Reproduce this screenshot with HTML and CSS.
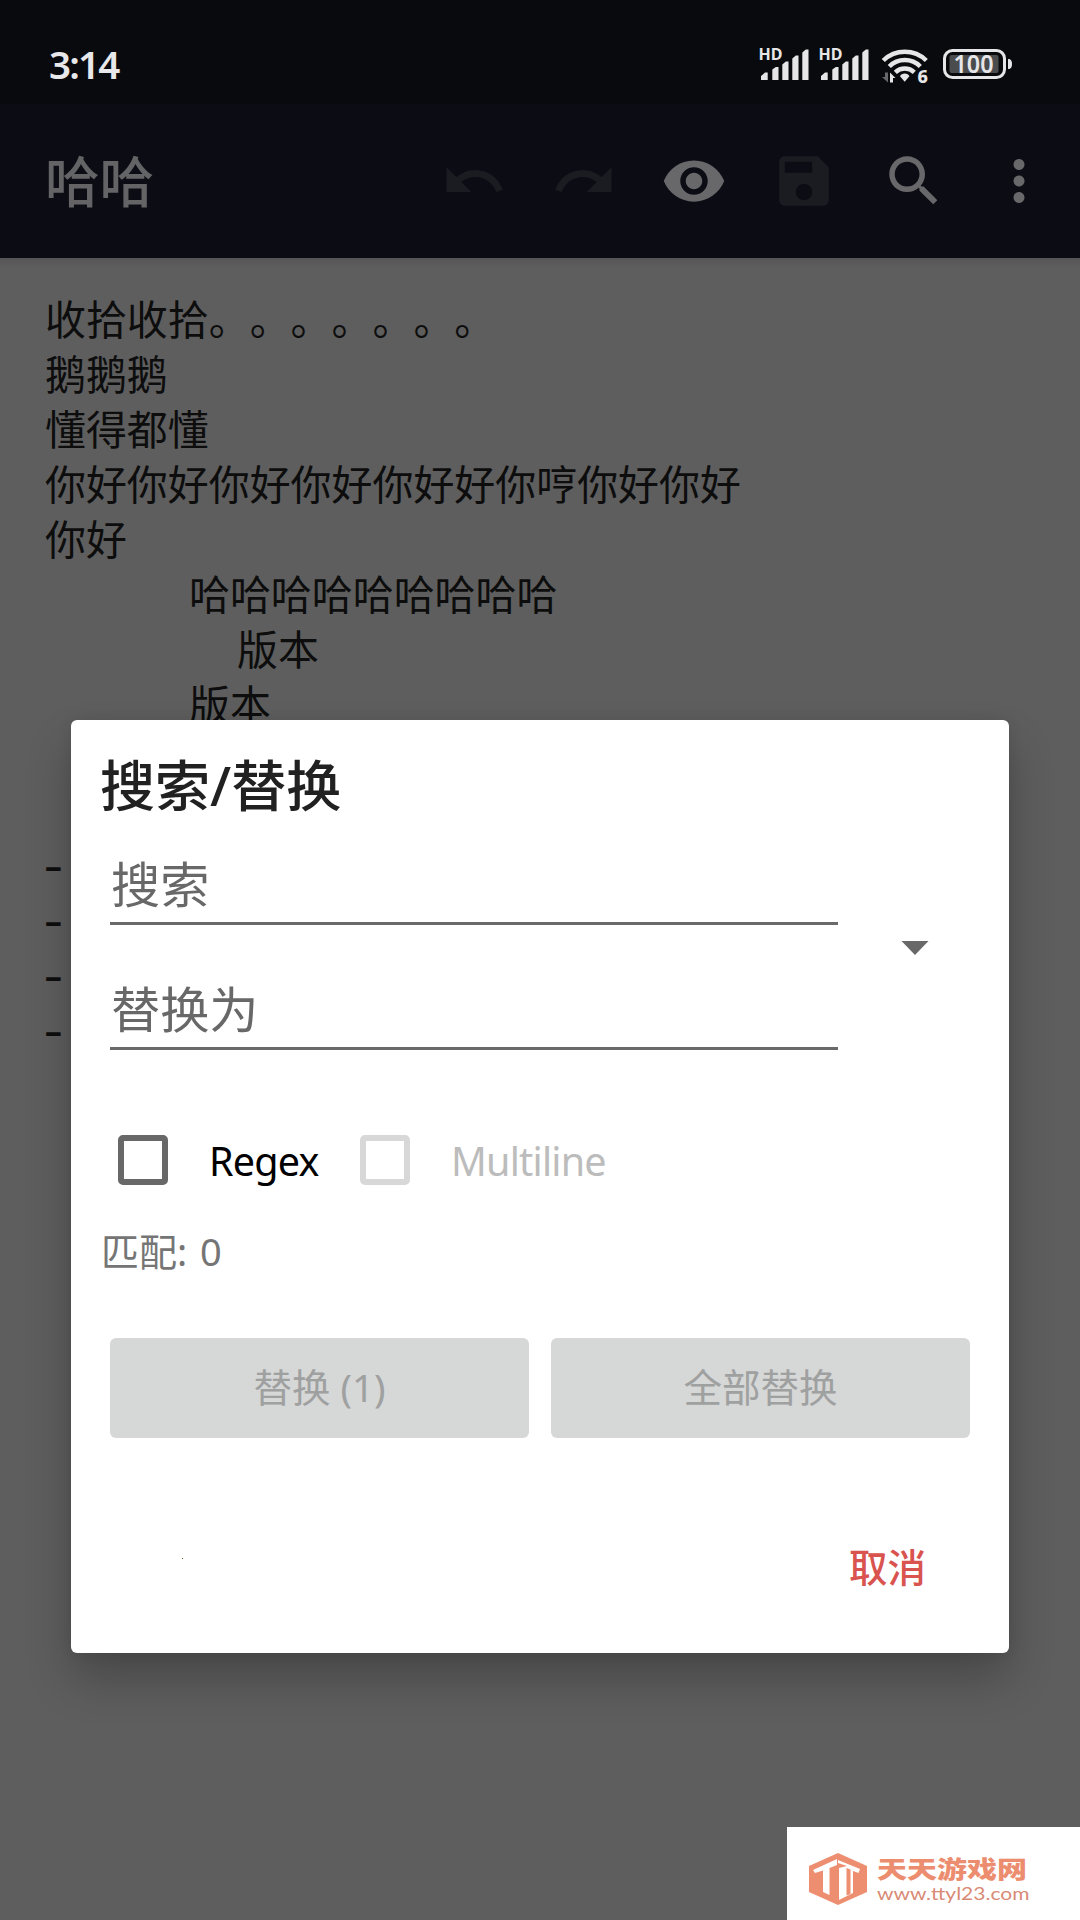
FILE: index.html
```html
<!DOCTYPE html>
<html lang="zh-CN">
<head>
<meta charset="utf-8">
<title>搜索/替换</title>
<link rel="stylesheet" href="styles.css">
</head>
<body>
<div class="screen">
  <header class="status">
    <span class="clock">3:14</span>
    <svg class="status-icons" viewBox="0 0 260 40" width="260" height="40">
      <defs>
        <g id="bars">
          <path d="M1 35v-4l4-3.500h2.700V35zM12.300 35V24.500l3.500-2.500h2.700V35zM22.300 35V19.500l3.500-3h2.700V35zM32.300 35V13.500l3.500-3h2.700V35zM42.300 35V7.500l3.500-3h2.700V35z"/>
        </g>
      </defs>
      <g class="lit">
        <use href="#bars" x="0"/>
        <use href="#bars" x="60"/>
        <text class="hd" x="-1.500" y="15" textLength="24" lengthAdjust="spacingAndGlyphs">HD</text>
        <text class="hd" x="58.500" y="15" textLength="24" lengthAdjust="spacingAndGlyphs">HD</text>
        <path d="M144.700 28.500c-2 0-4 1-4.700 2.700l4.700 5.500 4.700-5.500c-.7-1.700-2.700-2.700-4.700-2.700z"/>
        <text class="six" x="157.500" y="37.500">6</text>
        <path d="M130 27.500l5.500 5.500H133v4.500h-3z"/>
      </g>
      <path class="faint" d="M128 37.500l-6-5.500h3v-4.500h3z"/>
      <g class="arc">
        <path d="M123.300 15.500a31 31 0 0 1 43 0"/>
        <path d="M129.300 21.500a22 22 0 0 1 31 0"/>
        <path d="M135.300 27.300a14 14 0 0 1 19 0"/>
      </g>
      <rect class="shell" x="184.500" y="5.500" width="60" height="27" rx="8"/>
      <rect class="charge" x="189.500" y="10" width="49" height="18" rx="2"/>
      <path class="lit" d="M248 14c3 0 4 2 4 5s-1 5-4 5z"/>
      <text class="lit level" x="213.500" y="28" text-anchor="middle" textLength="40" lengthAdjust="spacingAndGlyphs">100</text>
    </svg>
  </header>

  <nav class="appbar">
    <h1 class="doc-title">哈哈</h1>
    <svg class="icon off" viewBox="0 0 24 24"><path d="M12.500 8c-2.650 0-5.050.99-6.900 2.600L2 7v9h9l-3.620-3.620c1.390-1.160 3.160-1.880 5.120-1.880 3.540 0 6.550 2.310 7.600 5.500l2.370-.78C21.080 11.030 17.150 8 12.500 8z"/></svg>
    <svg class="icon off" viewBox="0 0 24 24"><path d="M18.400 10.600C16.550 8.990 14.150 8 11.500 8c-4.650 0-8.580 3.030-9.960 7.220L3.900 16c1.050-3.190 4.050-5.500 7.600-5.500 1.950 0 3.730.72 5.120 1.880L13 16h9V7l-3.600 3.600z"/></svg>
    <svg class="icon" viewBox="0 0 24 24"><path d="M12 4.500C7 4.500 2.730 7.610 1 12c1.730 4.390 6 7.500 11 7.500s9.270-3.110 11-7.500c-1.730-4.390-6-7.500-11-7.500zM12 17c-2.760 0-5-2.240-5-5s2.240-5 5-5 5 2.240 5 5-2.240 5-5 5zm0-8c-1.660 0-3 1.340-3 3s1.340 3 3 3 3-1.340 3-3-1.340-3-3-3z"/></svg>
    <svg class="icon off" viewBox="0 0 24 24"><path d="M17 3H5c-1.110 0-2 .9-2 2v14c0 1.100.89 2 2 2h14c1.100 0 2-.9 2-2V7l-4-4zm-5 16c-1.660 0-3-1.340-3-3s1.340-3 3-3 3 1.340 3 3-1.340 3-3 3zm3-10H5V5h10v4z"/></svg>
    <svg class="icon" viewBox="0 0 24 24"><path d="M15.500 14h-.79l-.28-.27C15.410 12.590 16 11.110 16 9.500 16 5.910 13.090 3 9.500 3S3 5.910 3 9.500 5.910 16 9.500 16c1.610 0 3.090-.59 4.230-1.570l.27.28v.79l5 4.990L20.490 19l-4.990-5zm-6 0C7.010 14 5 11.990 5 9.500S7.010 5 9.500 5 14 7.010 14 9.500 11.990 14 9.500 14z"/></svg>
    <svg class="icon more" viewBox="0 0 24 24"><path d="M12 8c1.100 0 2-.9 2-2s-.9-2-2-2-2 .9-2 2 .9 2 2 2zm0 2c-1.100 0-2 .9-2 2s.9 2 2 2 2-.9 2-2-.9-2-2-2zm0 6c-1.100 0-2 .9-2 2s.9 2 2 2 2-.9 2-2-.9-2-2-2z"/></svg>
  </nav>

  <main class="editor">
    <p>收拾收拾。。。。。。。</p>
    <p>鹅鹅鹅</p>
    <p>懂得都懂</p>
    <p>你好你好你好你好你好好你哼你好你好</p>
    <p>你好</p>
    <p class="indent">哈哈哈哈哈哈哈哈哈</p>
    <p class="indent deep">版本</p>
    <p class="indent">版本</p>
    <p></p>
    <p></p>
    <p class="dash">-</p>
    <p class="dash">-</p>
    <p class="dash">-</p>
    <p class="dash">-</p>
  </main>

  <div class="overlay">
    <section class="dialog">
      <h2 class="dialog-title">搜索/替换</h2>
      <div class="fields">
        <div class="inputs">
          <div class="field">搜索</div>
          <div class="field second">替换为</div>
        </div>
        <svg class="caret" viewBox="0 0 28 14" width="28" height="14"><path d="M.5 0h27L14 14z"/></svg>
      </div>
      <div class="checks">
        <span class="box"></span><span class="label regex">Regex</span>
        <span class="box dim"></span><span class="label multi">Multiline</span>
      </div>
      <div class="matches">匹配: 0</div>
      <div class="buttons">
        <div class="button">替换 (1)</div>
        <div class="button">全部替换</div>
      </div>
      <div class="actions"><i class="speck"></i><span class="cancel">取消</span></div>
    </section>
  </div>

  <aside class="badge">
    <svg class="badge-logo" viewBox="0 0 58 52" width="58" height="52">
      <path class="hex" d="M29 0l29 13v26L29 52 0 39V13z"/>
      <path class="cut" d="M4 17L28 6v6l-7.500 3v27L14 39V17.500L6 20z"/>
      <path class="cut" d="M29 7l22 9-1.500 4-5.500-2v22l-14 7V15l8-2-9-3z"/>
      <path class="hex" d="M37.500 15l4 1.500V41l-4 1.500z"/>
    </svg>
    <div class="badge-text">
      <span class="badge-name">天天游戏网</span>
      <span class="badge-url">www.ttyl23.com</span>
    </div>
  </aside>
</div>
</body>
</html>
```
FILE: styles.css
```css
* { box-sizing: border-box; margin: 0; padding: 0; }

body {
  font-family: "Noto Sans", "Noto Sans CJK SC", sans-serif;
  text-spacing-trim: space-all;
  background: #5e5e5e;
}

.screen {
  position: relative;
  width: 1080px;
  height: 1920px;
  overflow: hidden;
  background: #5e5e5e;
}

/* status bar */
.status {
  display: flex;
  justify-content: space-between;
  height: 104px;
  padding: 45px 60px 0 49px;
  background: #090a0d;
}
.clock {
  font-size: 38.500px;
  line-height: 38px;
  font-weight: 600;
  letter-spacing: -1.8px;
  color: #e8e8ea;
}
.status-icons { overflow: visible; }
.lit { fill: #e6e6e8; }
.faint { fill: #66676a; }
.hd { font-size: 16px; font-weight: 700; }
.six { font-size: 18px; font-weight: 800; }
.level { font-size: 25px; font-weight: 600; }
.arc path { fill: none; stroke: #e6e6e8; stroke-width: 4.5; }
.shell { fill: none; stroke: #e6e6e8; stroke-width: 3; }
.charge { fill: #4b4c4e; }

/* app bar */
.appbar {
  display: flex;
  align-items: center;
  gap: 44px;
  height: 154px;
  padding: 0 28px 0 45px;
  background: #0c0c14;
}
.doc-title {
  flex: 1;
  font-size: 54.500px;
  font-weight: 500;
  line-height: 78px;
  color: #646467;
}
.icon { width: 66px; height: 66px; fill: #68686b; }
.icon.off { fill: #1b1b22; }
.icon.more { margin-left: -5px; }

/* document text */
.editor {
  padding: 34px 45px;
  font-size: 40.950px;
  line-height: 54px;
  color: #0d0d0d;
  background: linear-gradient(#565656, #5e5e5e 10px);
}
.editor p { height: 55px; white-space: pre; }
.editor .indent { padding-left: 144px; }
.editor .deep { padding-left: 192px; }
.editor .dash {
  font-family: Inter, sans-serif;
  font-size: 45px;
  line-height: 50px;
  text-indent: -2px;
}

/* dialog */
.overlay {
  position: absolute;
  inset: 0;
  padding: 720px 71px 0;
}
.dialog {
  height: 933px;
  border-radius: 6px;
  background: #fff;
  box-shadow: 0 26px 46px rgba(0, 0, 0, .24), 0 0 14px rgba(0, 0, 0, .08);
}
.dialog-title {
  height: 129px;
  padding-left: 29px;
  font-size: 55px;
  font-weight: 500;
  line-height: 129px;
  color: #212121;
}
.fields {
  display: flex;
  align-items: flex-start;
  gap: 63px;
  padding-left: 39px;
}
.inputs { width: 728px; }
.field {
  height: 76px;
  padding-left: 1px;
  border-bottom: 3px solid #6a6a6a;
  font-size: 49.200px;
  line-height: 69px;
  color: #686868;
}
.field.second { margin-top: 49px; }
.caret { margin-top: 92px; fill: #686868; }
.checks {
  display: flex;
  align-items: center;
  height: 60px;
  margin-top: 80px;
  padding-left: 47px;
}
.box {
  width: 50px;
  height: 50px;
  border: 6px solid #686868;
  border-radius: 5px;
}
.box.dim { border-color: #d8d8d8; }
.label { padding-top: 2px; font-size: 39.500px; line-height: 62px; letter-spacing: -.8px; }
.regex { width: 152px; margin-left: 40px; padding-left: 1px; color: #000; }
.multi { margin-left: 41px; color: #bcbcbc; }
.matches {
  height: 60px;
  margin-top: 32px;
  padding-left: 30px;
  font-size: 38px;
  line-height: 59px;
  word-spacing: 3px;
  color: #757575;
}
.buttons {
  display: flex;
  gap: 22px;
  margin-top: 56px;
  padding: 0 39px;
}
.button {
  flex: 1;
  height: 100px;
  border-radius: 6px;
  background: #d6d7d7;
  font-size: 38.500px;
  line-height: 99px;
  text-align: center;
  color: #9fa0a0;
}
.actions {
  display: flex;
  justify-content: space-between;
  margin-top: 99px;
  padding: 0 83px 0 111px;
}
.speck { width: 1px; height: 1px; margin-top: 21px; background: #6b5a20; }
.cancel {
  font-size: 38.500px;
  font-weight: 500;
  line-height: 60px;
  color: #d9534f;
}

/* site badge over the bottom right corner */
.badge {
  position: absolute;
  right: 0;
  bottom: 0;
  display: flex;
  gap: 10px;
  width: 293px;
  height: 93px;
  padding: 26px 0 0 22px;
  background: #fff;
}
.hex { fill: #ee8e70; }
.cut { fill: #fff; }
.badge-text { display: flex; flex-direction: column; gap: 4px; }
.badge-name {
  transform: scaleX(1.25);
  transform-origin: left;
  font-size: 24px;
  font-weight: 900;
  line-height: 31px;
  white-space: nowrap;
  color: #ec8d70;
}
.badge-url {
  transform: scaleX(1.2);
  transform-origin: left;
  font-family: Lato, sans-serif;
  font-size: 17.500px;
  line-height: 12px;
  color: #d98a75;
}
```
